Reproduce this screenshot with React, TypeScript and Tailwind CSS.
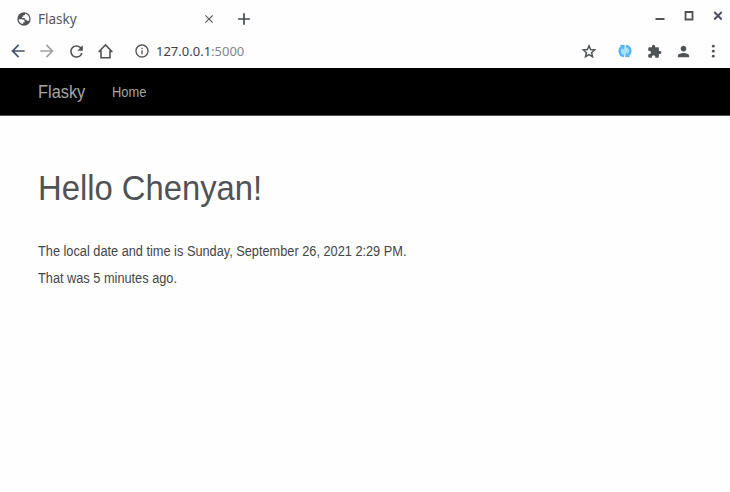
import type { ReactNode } from "react";
import { MdAdd, MdArrowBack, MdArrowForward, MdClose, MdExtension, MdInfoOutline, MdPerson, MdRefresh } from "react-icons/md";

function Slot({ children, className = "" }: { children: ReactNode; className?: string }) {
  return <button className={"flex h-6 shrink-0 items-center justify-center " + className}>{children}</button>;
}

function TabStrip() {
  return (
    <div className="flex h-[36px] items-start pt-[7px]">
      <Slot className="ml-4 w-4">
        <svg viewBox="0 0 24 24" width="16" height="16">
          <circle cx="12" cy="12" r="10" fill="#505457" />
          <path d="M4 12.500h4.500c2.800 0 4.500 1 4.500 3v1.300h-2.200v2.800C6.700 19.200 4 16 4 12.500Z" fill="#fefefe" />
          <path d="M13.500 4v2.300h-2.500v2.500H9v1.700h4.200v2.700h3v1.500h3.300c1.600-4.800-.7-9.700-6-10.700Z" fill="#fefefe" />
        </svg>
      </Slot>
      <span className="ml-[6px] w-[165px] font-['Noto_Sans',sans-serif] text-[13.500px] leading-6 text-[#55585c]">Flasky</span>
      <Slot className="w-[12px] text-[#55585c]"><MdClose size={14} className="shrink-0" /></Slot>
      <Slot className="ml-[19px] w-5 text-[#45484b]"><MdAdd size={20} /></Slot>
      <div className="-mt-[3px] ml-auto flex items-center text-[#505254]">
        <Slot className="w-[10px]"><svg width="10" height="10"><path d="M.5 8h9" stroke="currentColor" strokeWidth="2" /></svg></Slot>
        <Slot className="ml-[19px] w-[10px]"><svg width="10" height="10"><path d="M1.500 1h7v7.500h-7z" fill="none" stroke="currentColor" strokeWidth="1.800" /></svg></Slot>
        <Slot className="mr-[7px] ml-[19px] w-[10px] text-[#4d4b60]"><svg width="10" height="10"><path d="m1.300 1 7.400 7.500M8.700 1 1.300 8.500" stroke="currentColor" strokeWidth="1.900" /></svg></Slot>
      </div>
    </div>
  );
}

function AddressBar() {
  return (
    <div className="flex h-[32px] items-start pt-[3px] text-[#505356]">
      <Slot className="ml-2 w-5 text-[#465369]"><MdArrowBack size={20} /></Slot>
      <Slot className="ml-[9px] w-5 text-[#a0a2a4]"><MdArrowForward size={20} /></Slot>
      <Slot className="ml-[10px] w-[19px]"><MdRefresh size={19} /></Slot>
      <Slot className="ml-[11px] w-[17px]">
        <svg width="17" height="16" fill="none" stroke="currentColor" strokeWidth="1.600">
          <path d="M1.900 8.800 8.500 2l6.600 6.800M4 7.500v7.200h9V7.500M1.400 8.500H4M13 8.500h2.600" />
        </svg>
      </Slot>
      <Slot className="ml-5 w-4"><MdInfoOutline size={16} /></Slot>
      <span className="ml-[6px] font-['Noto_Sans',sans-serif] text-[13px] leading-6 text-[#3f4245]">
        127.0.0.1<span className="text-[#80868b]">:5000</span>
      </span>
      <div className="ml-auto flex items-center">
        <Slot className="w-4">
          <svg width="16" height="16" viewBox="0 0 24 24" fill="none" stroke="currentColor" strokeWidth="2.200">
            <path d="m12 4.300 2.400 5.600 6.100.5-4.600 4.100 1.400 6-5.300-3.200-5.300 3.200 1.400-6-4.600-4.100 6.100-.5z" />
          </svg>
        </Slot>
        <Slot className="ml-[20px] w-4">
          <svg width="16" height="16" viewBox="0 0 16 16" fill="none">
            <circle cx="8" cy="8" r="4.500" fill="#a3e2fc" />
            <path d="M7 13.200A5.200 5.200 0 0 1 4.600 4M9 2.800A5.200 5.200 0 0 1 11.400 12" stroke="#55b3fa" strokeWidth="2.300" />
            <path d="m3 1.700 5 .3-1.600 4.700zM13 14.300 8 14l1.600-4.700z" fill="#55b3fa" />
          </svg>
        </Slot>
        <Slot className="ml-[13px] w-4"><MdExtension size={15} /></Slot>
        <Slot className="ml-[13px] w-4"><MdPerson size={17} className="shrink-0" /></Slot>
        <Slot className="mr-2 ml-[13px] w-[18px]">
          <svg width="18" height="16" fill="currentColor"><circle cx="9.300" cy="3.200" r="1.400" /><circle cx="9.300" cy="8.200" r="1.400" /><circle cx="9.300" cy="13.200" r="1.400" /></svg>
        </Slot>
      </div>
    </div>
  );
}

export default function App() {
  return (
    <div className="flex h-[492px] w-[730px] flex-col overflow-hidden bg-[#fefefe] font-['Liberation_Sans',Arial,sans-serif]">
      <header>
        <TabStrip />
        <AddressBar />
      </header>
      <nav className="flex h-[48px] items-center border-b border-[#555] bg-black pl-[38px] text-[#a5a5a5]">
        <a className="w-[74px] origin-left scale-x-[0.935] pt-[2px] text-[17.500px]">Flasky</a>
        <a className="origin-left scale-x-[0.92] pt-px text-[14px]">Home</a>
      </nav>
      <main className="px-[38px] pt-[51px] text-[#505256]">
        <h1 className="w-max origin-left scale-x-[0.95] text-[34.500px] leading-[42px]">Hello Chenyan!</h1>
        <p className="mt-[33px] w-max origin-left scale-x-[0.911] text-[14px] leading-[18px] text-[#444649]">The local date and time is Sunday, September 26, 2021 2:29 PM.</p>
        <p className="mt-[9px] w-max origin-left scale-x-[0.911] text-[14px] leading-[18px] text-[#444649]">That was 5 minutes ago.</p>
      </main>
    </div>
  );
}
